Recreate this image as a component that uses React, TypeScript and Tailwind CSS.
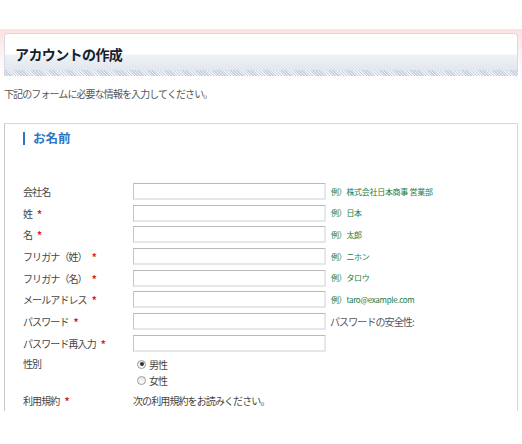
// App.tsx — アカウントの作成フォーム

type Row = { label: string; required?: boolean; hint?: string; hintGray?: boolean };

const rows: Row[] = [
  { label: '会社名', hint: '例）株式会社日本商事 営業部' },
  { label: '姓', required: true, hint: '例）日本' },
  { label: '名', required: true, hint: '例）太郎' },
  { label: 'フリガナ（姓）', required: true, hint: '例）ニホン' },
  { label: 'フリガナ（名）', required: true, hint: '例）タロウ' },
  { label: 'メールアドレス', required: true, hint: '例）taro@example.com' },
  { label: 'パスワード', required: true, hint: 'パスワードの安全性:', hintGray: true },
  { label: 'パスワード再入力', required: true },
];

function Req() {
  return <span className="ml-[5px] text-[#e02020] text-[10px] font-bold tracking-normal">*</span>;
}

function Radio({ checked, label }: { checked?: boolean; label: string }) {
  return (
    <div className="flex items-center h-[16.7px]">
      <span className="ml-[4px] w-[9px] h-[9px] rounded-full border border-[#9a9a9a] bg-[linear-gradient(#e8e8e8,#ffffff)] flex items-center justify-center">
        {checked && <span className="w-[4px] h-[4px] rounded-full bg-[#333]" />}
      </span>
      <span className="ml-[3px] text-[10px] tracking-[-0.9px] text-[#444]">{label}</span>
    </div>
  );
}

export default function App() {
  return (
    <div className="w-[522px] h-[444px] bg-white font-['Noto_Sans_CJK_JP','Noto_Sans',sans-serif] overflow-hidden">
      <div className="h-[29px]" />
      <div className="bg-[linear-gradient(#fde0e0,#fff3f3_55%,#ffffff)] pt-[4px] px-[4px]">
        {/* タイトル */}
        <div className="h-[37px] rounded-t-[4px] border border-b-0 border-[#d3dbe6] bg-[linear-gradient(#ffffff_0%,#ffffff_55%,#eef1f5_60%,#e2e7ee_100%)] pl-[10px] pt-[11px]">
          <h1 className="text-[14px] leading-[18px] tracking-[-0.6px] font-bold text-[#16202e]">アカウントの作成</h1>
        </div>
        <div className="h-[6px] bg-[repeating-linear-gradient(45deg,#c6cfdb_0px,#c6cfdb_1px,#eef1f5_1px,#eef1f5_2px)]" />
      </div>

      <p className="mt-[11px] ml-[4px] text-[10px] leading-[14px] tracking-[-0.9px] text-[#555]">
        下記のフォームに必要な情報を入力してください。
      </p>

      {/* お名前 */}
      <div className="mt-[22px] ml-[4px] w-[514px] h-[288px] border border-b-0 border-[#d6d6d6] border-l-[#c8c8c8]">
        <div className="mt-[7px] ml-[18px] flex items-center h-[14px]">
          <span className="w-[2px] h-[13px] bg-[#2d74c4]" />
          <h2 className="ml-[8px] text-[12.5px] leading-[14px] font-bold text-[#2d74c4]">お名前</h2>
        </div>

        <div className="mt-[38px] flex flex-col gap-[4.7px]">
          {rows.map(r => (
            <div key={r.label} className="flex items-center h-[17px]">
              <div className="w-[128px] pl-[18px] text-[10px] tracking-[-0.9px] text-[#444] flex items-center whitespace-nowrap">
                {r.label}
                {r.required && <Req />}
              </div>
              <div className="w-[193px] h-[17px] border border-[#d8dbe0] border-t-[#b8b8b8] border-l-[#c4c4c4] border-r-2 border-r-[#e4e7ec] border-b-2 border-b-[#e4e7ec] bg-white" />
              {r.hint && (
                <span
                  className={
                    r.hintGray
                      ? 'ml-[4px] text-[10px] tracking-[-0.9px] text-[#555]'
                      : 'ml-[5px] text-[8px] tracking-[-0.3px] text-[#237a3e]'
                  }
                >
                  {r.hint}
                </span>
              )}
            </div>
          ))}
        </div>

        {/* 性別 */}
        <div className="mt-[4px] flex">
          <div className="w-[128px] pl-[18px] text-[10px] tracking-[-0.9px] text-[#444]">性別</div>
          <div className="flex flex-col">
            <Radio checked label="男性" />
            <Radio label="女性" />
          </div>
        </div>

        {/* 利用規約 */}
        <div className="mt-[3px] flex items-center h-[16px]">
          <div className="w-[128px] pl-[18px] text-[10px] tracking-[-0.9px] text-[#444] flex items-center">
            利用規約
            <Req />
          </div>
          <span className="text-[10px] tracking-[-0.9px] text-[#444]">次の利用規約をお読みください。</span>
        </div>
      </div>
    </div>
  );
}
